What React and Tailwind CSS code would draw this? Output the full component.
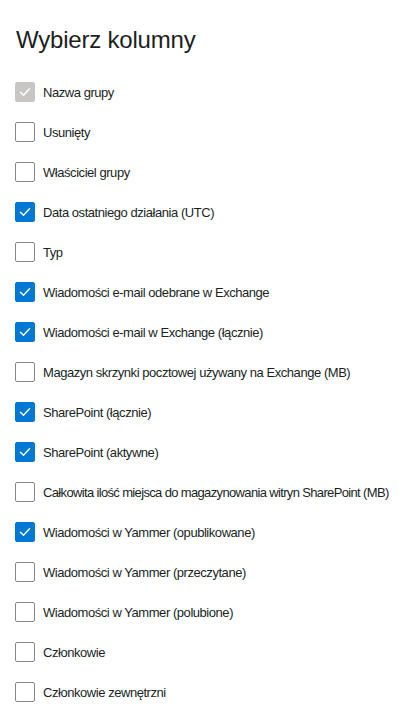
import React from "react";

const columns = [
  { label: "Nazwa grupy", checked: true, disabled: true },
  { label: "Usunięty", checked: false },
  { label: "Właściciel grupy", checked: false },
  { label: "Data ostatniego działania (UTC)", checked: true },
  { label: "Typ", checked: false },
  { label: "Wiadomości e-mail odebrane w Exchange", checked: true },
  { label: "Wiadomości e-mail w Exchange (łącznie)", checked: true },
  { label: "Magazyn skrzynki pocztowej używany na Exchange (MB)", checked: false },
  { label: "SharePoint (łącznie)", checked: true },
  { label: "SharePoint (aktywne)", checked: true },
  { label: "Całkowita ilość miejsca do magazynowania witryn SharePoint (MB)", checked: false, tight: true },
  { label: "Wiadomości w Yammer (opublikowane)", checked: true },
  { label: "Wiadomości w Yammer (przeczytane)", checked: false },
  { label: "Wiadomości w Yammer (polubione)", checked: false },
  { label: "Członkowie", checked: false },
  { label: "Członkowie zewnętrzni", checked: false },
];

const CheckIcon = () => (
  <svg className="w-3 h-3" viewBox="0 0 12 12" fill="none" stroke="white" strokeWidth={1.4}>
    <path d="M1.5 6.2l3 3 6-6.4" strokeLinecap="round" strokeLinejoin="round" />
  </svg>
);

const Row = ({ label, checked, disabled, tight }) => {
  const box = disabled
    ? "bg-[#c8c6c4] border-[#c8c6c4]"
    : checked
    ? "bg-[#0078d4] border-[#0078d4]"
    : "bg-white border-[#8a8886]";
  return (
    <div className="h-10 flex items-center">
      <div className={`w-5 h-5 rounded-[2px] border flex items-center justify-center shrink-0 ${box}`}>
        {checked && <CheckIcon />}
      </div>
      <span
        className={`ml-2 pt-0.5 text-[13px] text-[#201f1e] whitespace-nowrap ${
          tight ? "tracking-[-0.65px]" : "tracking-[-0.45px]"
        }`}
      >
        {label}
      </span>
    </div>
  );
};

export default function App() {
  return (
    <div className="w-[406px] h-[724px] bg-white pl-[15px] pt-[24px] font-['Liberation_Sans',sans-serif]">
      <h1 className="text-[24px] leading-8 text-[#201f1e] font-normal ml-px mb-4 tracking-[-0.2px]">Wybierz kolumny</h1>
      <div className="flex flex-col">
        {columns.map((c) => (
          <Row key={c.label} {...c} />
        ))}
      </div>
    </div>
  );
}
